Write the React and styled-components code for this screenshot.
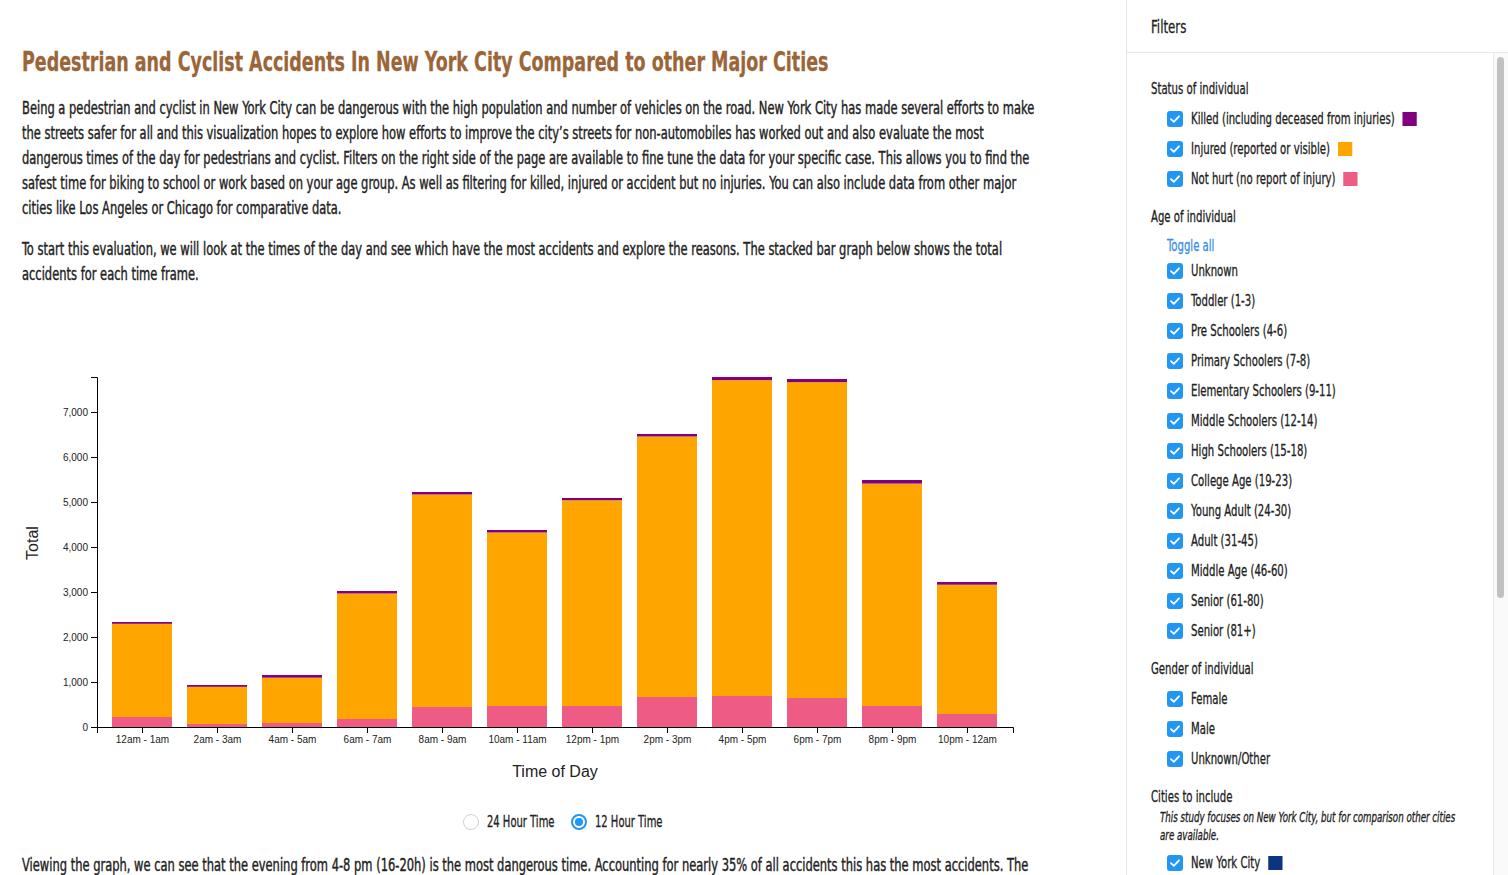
import React, { useState } from 'react';
import styled, { createGlobalStyle } from 'styled-components';

// no condensed face is installed, so DejaVu Sans Condensed is squeezed horizontally
const GlobalStyle = createGlobalStyle`
  html, body {
    margin: 0;
    padding: 0;
    background: #fff;
    font-family: "DejaVu Sans Condensed", "DejaVu Sans", sans-serif;
    color: #222;
  }
`;

const COLORS = {
  killed: '#800080',
  injured: '#ffa500',
  notHurt: '#ee5c86',
  nyc: '#0c347f',
};

// [not hurt, injured, killed]
const hours = [
  { label: '12am - 1am', v: [222, 2071, 40] },
  { label: '2am - 3am', v: [67, 826, 40] },
  { label: '4am - 5am', v: [89, 1007, 60] },
  { label: '6am - 7am', v: [178, 2789, 55] },
  { label: '8am - 9am', v: [444, 4723, 55] },
  { label: '10am - 11am', v: [467, 3856, 55] },
  { label: '12pm - 1pm', v: [467, 4572, 50] },
  { label: '2pm - 3pm', v: [667, 5789, 55] },
  { label: '4pm - 5pm', v: [689, 7019, 70] },
  { label: '6pm - 7pm', v: [644, 7019, 70] },
  { label: '8pm - 9pm', v: [467, 4942, 80] },
  { label: '10pm - 12am', v: [289, 2873, 60] },
];

const ages = [
  'Unknown',
  'Toddler (1-3)',
  'Pre Schoolers (4-6)',
  'Primary Schoolers (7-8)',
  'Elementary Schoolers (9-11)',
  'Middle Schoolers (12-14)',
  'High Schoolers (15-18)',
  'College Age (19-23)',
  'Young Adult (24-30)',
  'Adult (31-45)',
  'Middle Age (46-60)',
  'Senior (61-80)',
  'Senior (81+)',
];

const Page = styled.div`
  display: flex;
  height: 100vh;
  overflow: hidden;
`;

const Main = styled.main`
  flex: 1;
  min-width: 0;
  overflow: hidden;
  padding: 0 22px;
`;

const Title = styled.h1`
  margin: 44px 0 16px;
  font-size: 27px;
  line-height: 36px;
  font-weight: 700;
  color: #9b6538;
  white-space: nowrap;
  -webkit-text-stroke: 0.3px #9b6538;
  transform: scaleX(0.72);
  transform-origin: 0 0;
`;

const Para = styled.p`
  width: 1360px;
  margin: 0 0 16px;
  font-size: 17px;
  line-height: 25px;
  color: #222;
  -webkit-text-stroke: 0.4px #222;
  transform: scaleX(0.751);
  transform-origin: 0 0;
`;

const ChartSvg = styled.svg`
  display: block;
  overflow: visible;
  font-family: "Liberation Sans", Arial, sans-serif;
`;

const TimeToggle = styled.div`
  display: flex;
  justify-content: center;
  gap: 15px;
  height: 20px;
  margin: 9px 0 21px;
`;

const RadioLabel = styled.label`
  display: flex;
  align-items: center;
  gap: 8px;
  width: ${(p) => p.$w}px;
  font-size: 15px;
  color: #222;
  white-space: nowrap;
  cursor: pointer;
`;

const Squeezed = styled.span`
  display: inline-flex;
  align-items: center;
  transform: scaleX(${(p) => p.$s || 0.75});
  transform-origin: 0 50%;
  white-space: nowrap;
  -webkit-text-stroke: 0.3px currentColor;
`;

const RadioDot = styled.span`
  width: 16px;
  height: 16px;
  flex: none;
  box-sizing: border-box;
  border-radius: 50%;
  border: ${(p) => (p.$on ? '2px solid #2196f3' : '1px solid #d0d0d0')};
  display: flex;
  align-items: center;
  justify-content: center;

  &::after {
    content: '';
    width: 8px;
    height: 8px;
    border-radius: 50%;
    background: ${(p) => (p.$on ? '#2196f3' : 'transparent')};
  }
`;

const Sidebar = styled.aside`
  position: relative;
  width: 381px;
  flex: none;
  display: flex;
  flex-direction: column;
  border-left: 1px solid #e4e4e4;
  background: #fff;
`;

const SideHeader = styled.div`
  height: 52px;
  flex: none;
  display: flex;
  align-items: center;
  padding-left: 24px;
  border-bottom: 1px solid #e6e6e6;
  font-size: 18px;
  color: #222;
`;

const SideBody = styled.div`
  flex: 1;
  overflow: hidden;
  padding: 26px 24px 40px;
`;

const ScrollTrack = styled.div`
  position: absolute;
  top: 53px;
  right: 0;
  bottom: 0;
  width: 14px;
  background: #fafafa;
  border-left: 1px solid #ececec;
`;

const ScrollThumb = styled.div`
  margin: 4px 4px 0 3px;
  height: 541px;
  border-radius: 4px;
  background: #c1c1c1;
`;

const Section = styled.section`
  margin-bottom: 13px;
`;

const SectionTitle = styled.div`
  font-size: 15px;
  line-height: 20px;
  margin-bottom: 5px;
  color: #222;
`;

const ToggleAll = styled.a`
  display: block;
  margin: 9px 0 0 16px;
  font-size: 15px;
  line-height: 20px;
  color: #3a8ee6;
  cursor: pointer;
`;

const Note = styled.div`
  width: 430px;
  margin: -4px 0 4px 9px;
  font-size: 13.5px;
  line-height: 18px;
  font-style: italic;
  color: #222;
  -webkit-text-stroke: 0.3px #222;
  transform: scaleX(0.715);
  transform-origin: 0 0;
`;

const Row = styled.label`
  display: flex;
  align-items: center;
  height: 30px;
  padding-left: 16px;
  font-size: 15px;
  color: #222;
  white-space: nowrap;
  cursor: pointer;
`;

const Box = styled.span`
  width: 16px;
  height: 16px;
  flex: none;
  border-radius: 3px;
  background: ${(p) => (p.$on ? '#2196f3' : '#fff')};
  border: ${(p) => (p.$on ? 'none' : '1px solid #bbb')};
  box-sizing: border-box;
  display: flex;
  align-items: center;
  justify-content: center;
  margin-right: 8px;
`;

// lives inside the squeezed label, so its width is pre-scaled
const Swatch = styled.span`
  width: 18.7px;
  height: 14px;
  flex: none;
  margin-left: 10.7px;
  background: ${(p) => p.$color};
`;

const Check = ({ on }) => (
  <Box $on={on}>
    {on && (
      <svg width="10" height="8" viewBox="0 0 10 8">
        <path d="M1 4.2 L3.8 6.8 L9 1.3" fill="none" stroke="#fff" strokeWidth="1.8" strokeLinecap="round" strokeLinejoin="round" />
      </svg>
    )}
  </Box>
);

const FilterRow = ({ label, color, on, toggle }) => (
  <Row onClick={toggle}>
    <Check on={on} />
    <Squeezed>
      {label}
      {color && <Swatch $color={color} />}
    </Squeezed>
  </Row>
);

// chart coordinates are page coordinates (viewBox offset)
const X0 = 97;
const X1 = 1013;
const Y0 = 727;
const K = 0.045;

const Chart = () => {
  const ticks = [0, 1000, 2000, 3000, 4000, 5000, 6000, 7000];
  return (
    <ChartSvg width="1040" height="500" viewBox="22 303 1040 500">
      {hours.map((h, i) => {
        const cx = 142 + i * 75;
        let y = Y0;
        const cols = [COLORS.notHurt, COLORS.injured, COLORS.killed];
        return h.v.map((val, j) => {
          const hgt = val * K;
          y -= hgt;
          return <rect key={i + '-' + j} x={cx - 30} y={y} width="60" height={hgt} fill={cols[j]} />;
        });
      })}
      <path d={`M${X0 - 6} 377.5 H${X0 + 0.5} V${Y0 + 0.5} H${X0 - 6}`} fill="none" stroke="#000" />
      {ticks.map((t) => (
        <g key={t}>
          <line x1={X0 - 6} x2={X0} y1={Y0 - t * K + 0.5} y2={Y0 - t * K + 0.5} stroke="#000" />
          <text x={X0 - 9} y={Y0 - t * K + 0.5} dy="0.32em" fontSize="10" textAnchor="end" fill="#222">
            {t.toLocaleString('en-US')}
          </text>
        </g>
      ))}
      <path d={`M${X0 + 0.5} ${Y0 + 6} V${Y0 + 0.5} H${X1 + 0.5} V${Y0 + 6}`} fill="none" stroke="#000" />
      {hours.map((h, i) => {
        const cx = 142 + i * 75 + 0.5;
        return (
          <g key={h.label}>
            <line x1={cx} x2={cx} y1={Y0} y2={Y0 + 6} stroke="#000" />
            <text x={cx} y={Y0 + 9} dy="0.71em" fontSize="10" textAnchor="middle" fill="#222">
              {h.label}
            </text>
          </g>
        );
      })}
      <text x="555" y="777" fontSize="16" textAnchor="middle" fill="#222">Time of Day</text>
      <text transform="translate(38 543) rotate(-90)" fontSize="16" textAnchor="middle" fill="#222">Total</text>
    </ChartSvg>
  );
};

export default function App() {
  const [status, setStatus] = useState([true, true, true]);
  const [ageOn, setAgeOn] = useState(ages.map(() => true));
  const [gender, setGender] = useState([true, true, true]);
  const [cities, setCities] = useState([true, false, false]);
  const [twelve, setTwelve] = useState(true);

  const flip = (arr, set, i) => set(arr.map((v, k) => (k === i ? !v : v)));

  const statusItems = [
    { label: 'Killed (including deceased from injuries)', color: COLORS.killed },
    { label: 'Injured (reported or visible)', color: COLORS.injured },
    { label: 'Not hurt (no report of injury)', color: COLORS.notHurt },
  ];
  const cityItems = [
    { label: 'New York City', color: COLORS.nyc },
    { label: 'Los Angeles', color: '#2a9d8f' },
    { label: 'Chicago', color: '#7b8b9a' },
  ];

  return (
    <Page>
      <GlobalStyle />
      <Main>
        <Title>Pedestrian and Cyclist Accidents In New York City Compared to other Major Cities</Title>
        <Para>
          Being a pedestrian and cyclist in New York City can be dangerous with the high population and number of vehicles on the road. New York City has made several efforts to make the streets safer for all and this visualization hopes to explore how efforts to improve the city’s streets for non-automobiles has worked out and also evaluate the most dangerous times of the day for pedestrians and cyclist. Filters on the right side of the page are available to fine tune the data for your specific case. This allows you to find the safest time for biking to school or work based on your age group. As well as filtering for killed, injured or accident but no injuries. You can also include data from other major cities like Los Angeles or Chicago for comparative data.
        </Para>
        <Para>
          To start this evaluation, we will look at the times of the day and see which have the most accidents and explore the reasons. The stacked bar graph below shows the total accidents for each time frame.
        </Para>
        <Chart />
        <TimeToggle>
          <RadioLabel $w={93} onClick={() => setTwelve(false)}>
            <RadioDot $on={!twelve} />
            <Squeezed $s={0.74}>24 Hour Time</Squeezed>
          </RadioLabel>
          <RadioLabel $w={92} onClick={() => setTwelve(true)}>
            <RadioDot $on={twelve} />
            <Squeezed $s={0.74}>12 Hour Time</Squeezed>
          </RadioLabel>
        </TimeToggle>
        <Para>
          Viewing the graph, we can see that the evening from 4-8 pm (16-20h) is the most dangerous time. Accounting for nearly 35% of all accidents this has the most accidents. The morning rush hour is also notably busy, while the early hours of the night see the fewest accidents overall.
        </Para>
      </Main>

      <Sidebar>
        <SideHeader>
          <Squeezed $s={0.73}>Filters</Squeezed>
        </SideHeader>
        <SideBody>
          <Section>
            <SectionTitle><Squeezed>Status of individual</Squeezed></SectionTitle>
            {statusItems.map((it, i) => (
              <FilterRow key={it.label} label={it.label} color={it.color} on={status[i]} toggle={() => flip(status, setStatus, i)} />
            ))}
          </Section>
          <Section>
            <SectionTitle><Squeezed>Age of individual</Squeezed></SectionTitle>
            <ToggleAll onClick={() => setAgeOn(ages.map(() => !ageOn.every(Boolean)))}>
              <Squeezed>Toggle all</Squeezed>
            </ToggleAll>
            {ages.map((a, i) => (
              <FilterRow key={a} label={a} on={ageOn[i]} toggle={() => flip(ageOn, setAgeOn, i)} />
            ))}
          </Section>
          <Section>
            <SectionTitle><Squeezed>Gender of individual</Squeezed></SectionTitle>
            {['Female', 'Male', 'Unknown/Other'].map((g, i) => (
              <FilterRow key={g} label={g} on={gender[i]} toggle={() => flip(gender, setGender, i)} />
            ))}
          </Section>
          <Section>
            <SectionTitle><Squeezed>Cities to include</Squeezed></SectionTitle>
            <Note>This study focuses on New York City, but for comparison other cities are available.</Note>
            {cityItems.map((c, i) => (
              <FilterRow key={c.label} label={c.label} color={c.color} on={cities[i]} toggle={() => flip(cities, setCities, i)} />
            ))}
          </Section>
        </SideBody>
        <ScrollTrack>
          <ScrollThumb />
        </ScrollTrack>
      </Sidebar>
    </Page>
  );
}
